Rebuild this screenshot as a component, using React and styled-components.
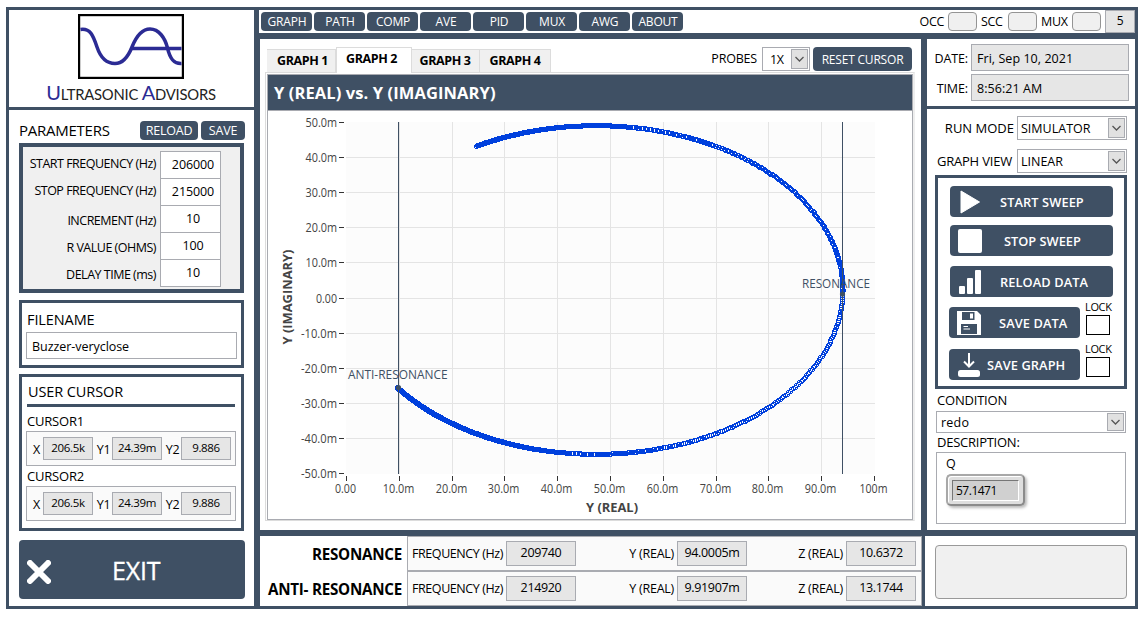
import React from 'react';
import styled, { createGlobalStyle } from 'styled-components';

const NAVY = '#3f5064';
const LINE = '#a9abb1';

const GlobalStyle = createGlobalStyle`
    * { box-sizing: border-box; }
    body {
        margin: 0;
        background: white;
        color: #000;
        font-family: "Open Sans", "Noto Sans", sans-serif;
        font-size: 12.5px;
        overflow: hidden;
    }
`;

const Frame = styled.div`
    width: 1132px;
    height: 602px;
    margin: 7px 0 0 6px;
    padding: 3px;
    display: flex;
    gap: 5px;
    background: ${NAVY};
`;

const Sidebar = styled.div`
    width: 245px;
    display: flex;
    flex-direction: column;
    gap: 3px;
`;

const Logo = styled.div`
    height: 97px;
    background: white;
    display: flex;
    flex-direction: column;
    align-items: center;
    padding: 4px 2px 0 0;
`;

const LogoName = styled.div`
    font-family: Lato, sans-serif;
    font-size: 14.8px;
    line-height: 24px;
    margin: 1px 0 0 1px;
    letter-spacing: -0.22px;
    color: #222;
    white-space: nowrap;
    b {
        font-weight: 400;
        font-size: 20px;
        color: #2b2b94;
    }
`;

const SideBody = styled.div`
    flex: 1;
    background: white;
    padding: 11px 9px 0 10px;
`;

const Text = styled.div`
    font-size: ${p => p.size || 12.5}px;
    font-weight: ${p => p.weight || 400};
    letter-spacing: ${p => p.ls ?? -0.35}px;
    line-height: ${p => p.h || 20}px;
    width: ${p => p.w ? p.w + 'px' : 'auto'};
    text-align: ${p => p.align || 'left'};
    margin: ${p => p.m || 0};
    white-space: nowrap;
    flex: none;
`;

const Row = styled.div`
    display: flex;
    align-items: ${p => p.align || 'flex-start'};
    justify-content: ${p => p.justify || 'flex-start'};
    gap: ${p => p.gap || 0}px;
`;

const Button = styled.button`
    width: ${p => p.w}px;
    height: ${p => p.h || 19}px;
    margin: ${p => p.m || 0};
    padding: ${p => p.pad || 0};
    border: 0;
    border-radius: 4px;
    background: ${NAVY};
    color: white;
    font-family: inherit;
    font-size: ${p => p.size || 12}px;
    font-weight: 500;
    letter-spacing: ${p => p.ls ?? -0.2}px;
    white-space: nowrap;
    flex: none;
    display: flex;
    align-items: center;
    justify-content: center;
`;

const Box = styled.div`
    border: ${p => p.b || 3}px solid ${NAVY};
    background: ${p => p.bg || 'white'};
    width: ${p => p.w || 225}px;
    height: ${p => p.h}px;
    margin: ${p => p.m || 0};
    padding: ${p => p.pad || 0};
`;

const ParamRow = styled.div`
    display: flex;
    justify-content: flex-end;
    height: 27px;
    padding-right: 19px;
`;

const Field = styled.div`
    width: ${p => p.w}px;
    height: ${p => p.h}px;
    line-height: ${p => p.lh || p.h - 3}px;
    border: 1px solid ${LINE};
    background: ${p => p.bg || '#e6e6e6'};
    text-align: ${p => p.align || 'center'};
    padding: ${p => p.pad || 0};
    margin: ${p => p.m || 0};
    font-size: ${p => p.size || 12.5}px;
    letter-spacing: ${p => p.ls ?? -0.35}px;
    white-space: nowrap;
    flex: none;
`;

const Rule = styled.div`
    width: 208px;
    height: 3px;
    background: ${NAVY};
    margin-left: 1px;
`;

const Group = styled.div`
    display: flex;
    border: 1px solid ${LINE};
    background: #fafafa;
    width: ${p => p.w}px;
    height: ${p => p.h}px;
    margin: ${p => p.m || 0};
    padding: ${p => p.pad || 0};
`;

const ExitButton = styled.button`
    display: flex;
    align-items: center;
    width: 226px;
    height: 59px;
    margin-top: 9px;
    padding: 0 0 0 8px;
    border: 0;
    border-radius: 4px;
    background: ${NAVY};
    color: white;
    font: 500 25px "Open Sans", sans-serif;
    letter-spacing: -0.2px;
    -webkit-text-stroke: 0.3px white;
    span { margin: 1px 0 0 61px; }
    svg { margin-top: 5px; }
`;

const Main = styled.div`
    width: 876px;
    display: flex;
    flex-direction: column;
    gap: 6px;
`;

const TopBar = styled.div`
    display: flex;
    align-items: flex-start;
    height: 23px;
    padding: 2px 0 0 2px;
    gap: 2px;
    background: white;
`;

const Status = styled.div`
    display: flex;
    margin: -2px 0 0 auto;
`;

const Led = styled.div`
    width: 29px;
    height: 19px;
    margin: 2px 4px 0 4px;
    border: 1px solid #949494;
    border-radius: 4px;
    background: #f0f0f0;
`;

const Middle = styled.div`
    display: flex;
    gap: 6px;
    height: 491px;
    padding-left: 1px;
`;

const GraphPanel = styled.div`
    width: 661px;
    background: white;
    padding: 8px 0 0 5px;
`;

const TabRow = styled.div`
    display: flex;
    align-items: flex-end;
    height: 25px;
    padding-left: 2px;
`;

const Tab = styled.div`
    width: ${p => p.w}px;
    height: ${p => p.active ? 26 : 24}px;
    line-height: ${p => p.active ? 22 : 22}px;
    margin-bottom: -1px;
    padding: ${p => p.pad || 0};
    border: 1px solid #dcdcdc;
    border-width: 1px 1px ${p => p.active ? 0 : 1}px 0;
    border-left: ${p => p.active ? '1px solid #dcdcdc' : 0};
    background: ${p => p.active ? 'white' : '#f0f0f0'};
    position: relative;
    font-weight: 700;
    font-size: 12.5px;
    letter-spacing: -0.4px;
    text-align: center;
    white-space: nowrap;
`;

const SelectBox = styled.div`
    display: flex;
    align-items: center;
    justify-content: space-between;
    width: ${p => p.w}px;
    height: ${p => p.h || 24}px;
    margin: ${p => p.m || 0};
    padding: 0 1px 0 ${p => p.pl || 3}px;
    border: 1px solid ${LINE};
    background: white;
    letter-spacing: ${p => p.ls ?? 0}px;
    font-size: 12.5px;
    flex: none;
`;

const Arrow = styled.div`
    display: flex;
    align-items: center;
    justify-content: center;
    width: 17px;
    height: ${p => p.h || 20}px;
    border: 1px solid ${LINE};
    background: #e1e1e1;
`;

const TabPage = styled.div`
    width: 650px;
    height: 449px;
    border: 1px solid #dcdcdc;
    border-right: 2px solid #eee;
    padding: 1px 0 0 1px;
`;

const Chart = styled.div`
    width: 646px;
    height: 446px;
    border: 1px solid ${LINE};
`;

const ChartTitle = styled.div`
    height: 36px;
    line-height: 35px;
    padding-left: 6px;
    background: ${NAVY};
    border-bottom: 1px solid ${LINE};
    color: white;
    font-size: 16.5px;
    font-weight: 700;
    letter-spacing: 0.1px;
`;

const Controls = styled.div`
    width: 208px;
    display: flex;
    flex-direction: column;
    gap: 3px;
`;

const Clock = styled.div`
    height: 67px;
    background: white;
    padding: 5px 6px 0 0;
`;

const RunPanel = styled.div`
    flex: 1;
    background: white;
    padding: 7px 8px 0 8px;
`;

const ActionButton = styled(Button)`
    height: 31px;
    justify-content: flex-start;
    padding: 0 0 0 ${p => p.pl || 7}px;
    font-size: 12.8px;
    font-weight: 600;
    letter-spacing: ${p => p.ls ?? 0.1}px;
    svg { margin-right: ${p => p.gap}px; flex: none; }
`;

const Check = styled.div`
    width: 24px;
    height: 20px;
    border: 1px solid #000;
    background: white;
`;

const Description = styled.div`
    width: 190px;
    height: 72px;
    margin-left: 1px;
    padding: 1px 0 0 9px;
    border: 1px solid ${LINE};
`;

const Meter = styled.div`
    width: 79px;
    height: 32px;
    padding: 4px;
    border: 2px solid #8b8b8b;
    border-top-color: #a8a8a8;
    border-left-color: #a8a8a8;
    border-radius: 5px;
    background: #dedede;
    box-shadow: inset 1px 1px 0 #fff, 2px 2px 3px #bbb;
    div {
        height: 21px;
        padding-left: 3px;
        line-height: 19px;
        border: 1px solid #777;
        border-right-color: #fff;
        border-bottom-color: #fff;
        background: #d0d0d0;
        font-size: 12px;
        letter-spacing: -0.5px;
    }
`;

const Bottom = styled.div`
    display: flex;
    gap: 3px;
    height: 70px;
    padding-left: 1px;
`;

const Results = styled.div`
    width: 662px;
    background: white;
`;

const ResultRow = styled.div`
    display: flex;
    height: 35px;
`;

const MessagePanel = styled.div`
    width: 210px;
    padding: 9px 8px 0 10px;
    background: white;
`;

const Message = styled.div`
    height: 54px;
    border: 1px solid #999;
    border-radius: 4px;
    background: #f0f0f0;
`;

const Plot = styled.svg`
    display: block;
    font-family: "Open Sans", sans-serif;
    font-size: 12px;
`;

const Chevron = () => <svg width="11" height="7" viewBox="0 0 11 7">
    <path d="M1.5 1L5.5 5L9.5 1" fill="none" stroke="#555" strokeWidth="1.3" />
</svg>;

const Select = ({ value, arrowHeight, ...rest }) => <SelectBox {...rest}>
    <span>{value}</span>
    <Arrow h={arrowHeight}><Chevron /></Arrow>
</SelectBox>;

const params = [
    ['START FREQUENCY (Hz)', '206000', 25],
    ['STOP FREQUENCY (Hz)', '215000', 25],
    ['INCREMENT (Hz)', '10', 31],
    ['R VALUE (OHMS)', '100', 31],
    ['DELAY TIME (ms)', '10', 31],
];

const menu = ['GRAPH', 'PATH', 'COMP', 'AVE', 'PID', 'MUX', 'AWG', 'ABOUT'];

const results = [
    ['RESONANCE', '209740', '94.0005m', '10.6372'],
    ['ANTI- RESONANCE', '214920', '9.91907m', '13.1744'],
];

// admittance circle in plot coordinates, one marker per sweep step
const points = [];
for (let f = 206000; f <= 214920; f += 10) {
    const d = f - 209740;
    const a = 2 * Math.atan(d * (d < 0 ? 4.54e-4 : 5.85e-4));
    points.push([
        Math.round(595.5 + 247 * Math.cos(a)) + 0.5,
        Math.round(289.5 + 164.3 * Math.sin(a)) + 0.5,
    ]);
}

// small open ring, 5px across with the corners cut
const ring = ([x, y]) => `M${x - 1.5} ${y - 2}h3M${x - 1.5} ${y + 2}h3M${x - 2} ${y - 1.5}v3M${x + 2} ${y - 1.5}v3`;
const markers = points.map(ring).join('');

const xTicks = [346, 399, 452, 504, 557, 610, 663, 716, 768, 821, 874];
const xLabels = ['0.00', '10.0m', '20.0m', '30.0m', '40.0m', '50.0m', '60.0m', '70.0m', '80.0m', '90.0m', '100m'];
const yTicks = [122, 157, 192, 227, 262, 298, 333, 368, 403, 438, 473];
const yLabels = ['50.0m', '40.0m', '30.0m', '20.0m', '10.0m', '0.00', '-10.0m', '-20.0m', '-30.0m', '-40.0m', '-50.0m'];
const labelWidth = t => ({ '0.00': 21, '100m': 28 }[t] || (t[0] === '-' ? 36 : 31.5));

const Graph = () => <Plot width="644" height="408" viewBox="268 111 644 408">
    <rect x="346" y="122" width="529" height="352" fill="#fcfcfc" />
    <g stroke="#e4e4e4" shapeRendering="crispEdges">
        {xTicks.slice(1, -1).map(x => <line key={x} x1={x + 0.5} x2={x + 0.5} y1="122" y2="474" />)}
        {yTicks.slice(1, -1).map(y => <line key={y} x1="346" x2="875" y1={y + 0.5} y2={y + 0.5} />)}
    </g>
    <g stroke="#333" shapeRendering="crispEdges">
        {xTicks.map(x => <line key={x} x1={x + 0.5} x2={x + 0.5} y1="476" y2="481" />)}
        {yTicks.map(y => <line key={y} x1="339" x2="344" y1={y + 0.5} y2={y + 0.5} />)}
    </g>
    <g fill="#444">
        {xTicks.map((x, i) => <text key={x} x={x - 0.5} y="493" textAnchor="middle"
            textLength={labelWidth(xLabels[i])} lengthAdjust="spacingAndGlyphs">{xLabels[i]}</text>)}
        {yTicks.map((y, i) => <text key={y} x="337" y={y + 5} textAnchor="end"
            textLength={labelWidth(yLabels[i])} lengthAdjust="spacingAndGlyphs">{yLabels[i]}</text>)}
        <text x="612" y="512" fontSize="13" fontWeight="700" textAnchor="middle"
            textLength="52" lengthAdjust="spacingAndGlyphs">Y (REAL)</text>
        <text transform="translate(292 297) rotate(-90)" fontSize="12.5" fontWeight="700" textAnchor="middle"
            textLength="95" lengthAdjust="spacingAndGlyphs">Y (IMAGINARY)</text>
    </g>
    <path d={markers} fill="none" stroke="#0040dd" shapeRendering="crispEdges" />
    <g stroke={NAVY} shapeRendering="crispEdges">
        <line x1="398.5" x2="398.5" y1="122" y2="474" />
        <line x1="842.5" x2="842.5" y1="122" y2="474" />
    </g>
    <g fill={NAVY}>
        <circle cx="398.5" cy="387.5" r="2.6" />
        <circle cx="842.5" cy="294" r="2.6" />
        <text x="348" y="379" textLength="99.5" lengthAdjust="spacingAndGlyphs">ANTI-RESONANCE</text>
        <text x="802" y="288" textLength="68" lengthAdjust="spacingAndGlyphs">RESONANCE</text>
    </g>
</Plot>;

const CursorGroup = () => <Group w={210} h={35} pad="5px 0 0 6px">
    <Text h={25} w={10}>X</Text>
    <Field w={50} h={23} size={11.5}>206.5k</Field>
    <Text h={25} w={17} m="0 0 0 2px" align="center">Y1</Text>
    <Field w={50} h={23} size={11.5}>24.39m</Field>
    <Text h={25} w={17} m="0 0 0 2px" align="center">Y2</Text>
    <Field w={50} h={23} size={11.5}>9.886</Field>
</Group>;

const App = () => <>
    <GlobalStyle />
    <Frame>
        <Sidebar>
            <Logo>
                <svg width="106" height="65" viewBox="0 0 106 65">
                    <rect x="1" y="1" width="104" height="63" fill="white" stroke="#000" strokeWidth="2.4" />
                    <g fill="none" stroke="#2b2b94" strokeWidth="3.5">
                        <path d="M2.5 15.5C12 14 15 21 19 33C23 45 29 49.5 37 49.5C45 49.5 50 43 54 33C58 23 63 15 72 15C81 15 87 24 89.5 34C92 45 96 50 103.5 49.5" />
                        <path d="M54 34.5H103.5" />
                    </g>
                </svg>
                <LogoName><b>U</b>LTRASONIC <b>A</b>DVISORS</LogoName>
            </Logo>
            <SideBody>
                <Row>
                    <Text size={15} ls={-0.25} w={121} h={19}>PARAMETERS</Text>
                    <Button w={58} m="0 3px 0 0" size={12.5}>RELOAD</Button>
                    <Button w={44} size={12.5}>SAVE</Button>
                </Row>
                <Box b={4} h={150} m="3px 0 0" pad="4px 0 0" bg="#f0f0f0">
                    {params.map(([name, value, h]) => <ParamRow key={name}>
                        <Text h={h} m="0 4px 0 0" ls={-0.5}>{name}</Text>
                        <Field w={61} h={28} bg="white" ls={-0.1}
                            pad={value.length > 3 ? '0 0 0 5px' : '0 0 0 5px'}>{value}</Field>
                    </ParamRow>)}
                </Box>
                <Box h={68} m="7px 0 0" pad="7px 0 0 4px">
                    <Text size={14.5} ls={-0.1} m="0 0 2px 1px">FILENAME</Text>
                    <Field w={211} h={27} lh={27} bg="white" align="left" pad="0 0 0 5px" ls={-0.05}>Buzzer-veryclose</Field>
                </Box>
                <Box h={157} m="6px 0 0" pad="5px 0 0 4px">
                    <Text size={14.5} ls={-0.1} m="0 0 2px 2px">USER CURSOR</Text>
                    <Rule />
                    <Text size={13} ls={-0.2} h={20} m="4px 0 0 1px">CURSOR1</Text>
                    <CursorGroup />
                    <Text size={13} ls={-0.2} h={20} m="0 0 0 1px">CURSOR2</Text>
                    <CursorGroup />
                </Box>
                <ExitButton>
                    <svg width="24" height="24" viewBox="0 0 24 24">
                        <path d="M3 3L21 21M21 3L3 21" stroke="white" strokeWidth="6" strokeLinecap="round" />
                    </svg>
                    <span>EXIT</span>
                </ExitButton>
            </SideBody>
        </Sidebar>
        <Main>
            <TopBar>
                {menu.map(name => <Button key={name} w={51} pad="0 0 0 1px">{name}</Button>)}
                <Status>
                    <Text h={23}>OCC</Text><Led />
                    <Text h={23} w={23}>SCC</Text><Led />
                    <Text h={23} w={27}>MUX</Text><Led />
                    <Field w={30} h={23} size={12}>5</Field>
                </Status>
            </TopBar>
            <Middle>
                <GraphPanel>
                    <TabRow>
                        <Tab w={69} pad="0 0 0 3px">GRAPH 1</Tab>
                        <Tab w={76} pad="0 5px 0 0" active>GRAPH 2</Tab>
                        <Tab w={68} pad="0 1px 0 0">GRAPH 3</Tab>
                        <Tab w={71}>GRAPH 4</Tab>
                        <Text m="0 5px 0 auto" h={26} ls={-0.2}>PROBES</Text>
                        <Select value="1X" w={48} m="0 3px 1px 0" pl={7} ls={-0.3} />
                        <Button w={99} h={24} m="0 9px 1px 0" ls={-0.2}>RESET CURSOR</Button>
                    </TabRow>
                    <TabPage>
                        <Chart>
                            <ChartTitle>Y (REAL) vs. Y (IMAGINARY)</ChartTitle>
                            <Graph />
                        </Chart>
                    </TabPage>
                </GraphPanel>
                <Controls>
                    <Clock>
                        <Row justify="flex-end" gap={3}>
                            <Text h={30} ls={-0.1}>DATE:</Text>
                            <Field w={158} h={27} lh={27} align="left" pad="0 0 0 5px" ls={0.05}>Fri, Sep 10, 2021</Field>
                        </Row>
                        <Row justify="flex-end" gap={3}>
                            <Text h={29} ls={-0.1}>TIME:</Text>
                            <Field w={158} h={27} lh={27} align="left" pad="0 0 0 5px" ls={0.05}>8:56:21 AM</Field>
                        </Row>
                    </Clock>
                    <RunPanel>
                        <Row justify="flex-end" gap={3}>
                            <Text h={24} size={13} ls={0}>RUN MODE</Text>
                            <Select value="SIMULATOR" w={110} />
                        </Row>
                        <Row justify="flex-end">
                            <Text h={24} size={13} ls={-0.2} m="9px 5px 0 0">GRAPH VIEW</Text>
                            <Select value="LINEAR" w={110} m="9px 0 0" />
                        </Row>
                        <Box w={192} h={214} m="2px 0 0" pad="8px 0 0 11px">
                            <ActionButton w={163} pl={10} gap={20} m="0 0 8px 1px">
                                <svg width="20" height="24" viewBox="0 0 20 24">
                                    <path d="M1 1L19.5 12L1 23Z" fill="white" stroke="white" strokeLinejoin="round" />
                                </svg>
                                START SWEEP
                            </ActionButton>
                            <ActionButton w={163} pl={8} gap={22} m="0 0 10px 1px" ls={0}>
                                <svg width="24" height="24"><rect width="24" height="24" rx="2" fill="white" /></svg>
                                STOP SWEEP
                            </ActionButton>
                            <ActionButton w={163} pl={9} gap={19} m="0 0 10px 1px">
                                <svg width="22" height="24" viewBox="0 0 22 24" fill="white">
                                    <rect y="16" width="6" height="8" rx="1" />
                                    <rect x="8" y="8" width="6" height="16" rx="1" />
                                    <rect x="16" width="6" height="24" rx="1" />
                                </svg>
                                RELOAD DATA
                            </ActionButton>
                            <Row gap={6}>
                                <ActionButton w={131} pl={8} gap={18}>
                                    <svg width="24" height="24" viewBox="0 0 24 24">
                                        <path d="M0 0H20L24 4V24H0Z" fill="white" />
                                        <path d="M5 1H17.5V9H5ZM4 13H20V23H4Z" fill={NAVY} />
                                        <path d="M13 2.5H16V7.5H13Z" fill="white" />
                                        <path d="M6.5 15.5H11M6.5 18H13" stroke="white" />
                                    </svg>
                                    SAVE DATA
                                </ActionButton>
                                <div>
                                    <Text size={11} h={16} m="-8px 0 0 -1px">LOCK</Text>
                                    <Check />
                                </div>
                            </Row>
                            <Row gap={6}>
                                <ActionButton w={131} pl={9} gap={7} m="11px 0 0">
                                    <svg width="22" height="24" viewBox="0 0 22 24">
                                        <rect y="17" width="22" height="7" rx="2.5" fill="white" />
                                        <path d="M11 0V13M6 8.5L11 13.5L16 8.5" fill="none" stroke="white" strokeWidth="2" />
                                    </svg>
                                    SAVE GRAPH
                                </ActionButton>
                                <div>
                                    <Text size={11} h={16} m="3px 0 0 -1px">LOCK</Text>
                                    <Check />
                                </div>
                            </Row>
                        </Box>
                        <Text size={13} ls={-0.2} m="1px 0 1px 2px">CONDITION</Text>
                        <Select value="redo" w={190} h={22} arrowHeight={18} pl={4} m="0 0 0 1px" ls={0.2} />
                        <Text size={13} ls={-0.25} m="-1px 0 0 2px">DESCRIPTION:</Text>
                        <Description>
                            <Text>Q</Text>
                            <Meter><div>57.1471</div></Meter>
                        </Description>
                    </RunPanel>
                </Controls>
            </Middle>
            <Bottom>
                <Results>
                    {results.map(([name, freq, y, z]) => <ResultRow key={name}>
                        <Text w={142} h={36} align="right" size={15.2} ls={-0.25} weight={700} m="0 5px 0 0">{name}</Text>
                        <Group w={515} h={35} pad="4px 0 0 4px">
                            <Text w={94} h={26} ls={-0.42}>FREQUENCY (Hz)</Text>
                            <Field w={70} h={25}>{freq}</Field>
                            <Text w={98} h={26} align="right" m="0 3px 0 0" ls={-0.25}>Y (REAL)</Text>
                            <Field w={70} h={25}>{y}</Field>
                            <Text w={96} h={26} align="right" m="0 3px 0 0" ls={-0.25}>Z (REAL)</Text>
                            <Field w={70} h={25}>{z}</Field>
                        </Group>
                    </ResultRow>)}
                </Results>
                <MessagePanel>
                    <Message />
                </MessagePanel>
            </Bottom>
        </Main>
    </Frame>
</>;

export default App;
